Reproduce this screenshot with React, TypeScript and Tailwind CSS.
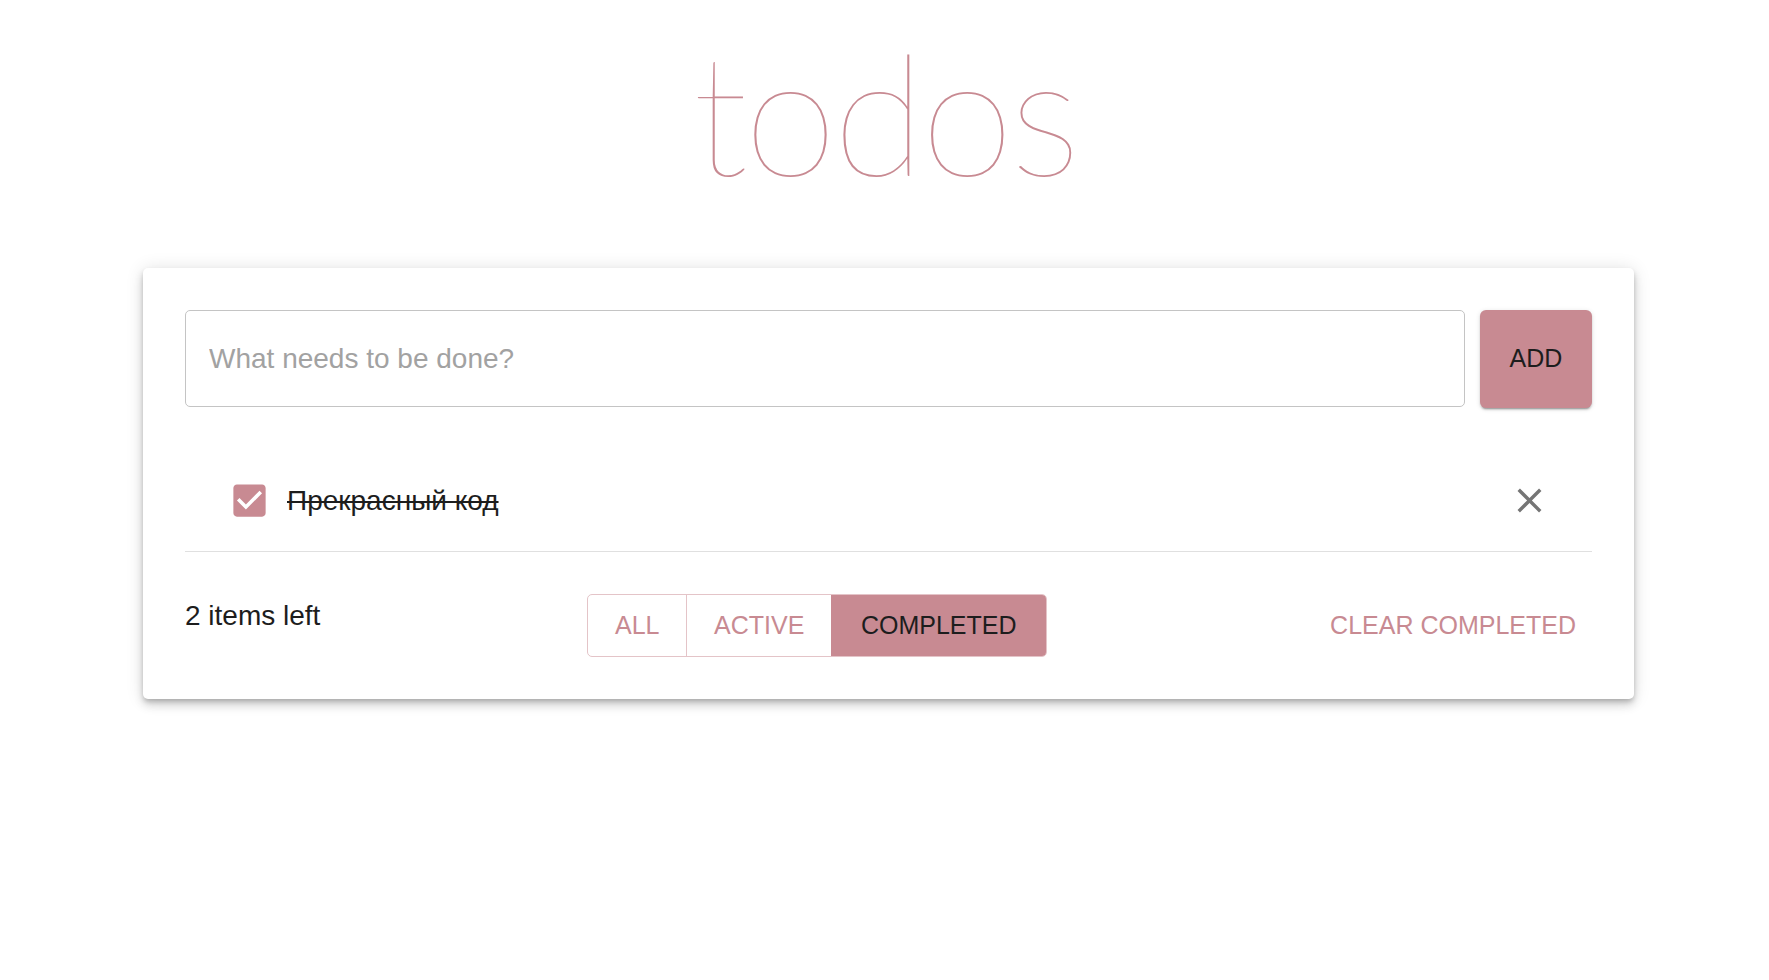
import { useState } from "react";

type Filter = "all" | "active" | "completed";

const PINK = "#c88a92";

export default function App() {
    const [filter, setFilter] = useState<Filter>("completed");
    const [text, setText] = useState<string>("");
    const [todos, setTodos] = useState([
        { id: 1, title: "Прекрасный код", done: true },
    ]);

    const toggle = (id: number) => {
        setTodos(todos.map((t) => (t.id === id ? { ...t, done: !t.done } : t)));
    };

    const remove = (id: number) => {
        setTodos(todos.filter((t) => t.id !== id));
    };

    const visible = todos.filter((t) =>
        filter === "all" ? true : filter === "active" ? !t.done : t.done
    );

    return (
        <div className="min-h-screen bg-white font-['Liberation_Sans',Arial,sans-serif] text-[#1d1d1d]">
            <h1 className="pt-[21px] h-[268px] text-center font-['Lato',sans-serif] font-thin text-[169px] leading-[180px] text-[#c88a92] tracking-[-4px]">
                todos
            </h1>

            <div className="pl-[143px] pr-[135px]">
                <div className="bg-white rounded-[5px] p-[42px] shadow-[0_3px_5px_-1px_rgba(0,0,0,0.2),0_6px_10px_0_rgba(0,0,0,0.14),0_1px_18px_0_rgba(0,0,0,0.12)]">
                    <div className="flex gap-[15px]">
                        <input
                            value={text}
                            onChange={(e) => setText(e.target.value)}
                            placeholder="What needs to be done?"
                            className="flex-1 h-[97px] px-[23px] text-[28px] border border-[#c4c4c4] rounded-[5px] outline-none placeholder:text-[#a2a2a2]"
                        />
                        <button className="w-[112px] h-[98px] rounded-[6px] bg-[#c88a92] text-[25px] text-[#1d1d1d] shadow-[0_3px_1px_-2px_rgba(0,0,0,0.2),0_2px_2px_0_rgba(0,0,0,0.14),0_1px_5px_0_rgba(0,0,0,0.12)]">
                            ADD
                        </button>
                    </div>

                    <ul className="mt-[42px]">
                        {visible.map((todo) => (
                            <li key={todo.id} className="flex items-center h-[102px] border-b border-[#e0e0e0] pl-[40px] pr-[42px]">
                                <button onClick={() => toggle(todo.id)} className="w-[43px] h-[43px] ml-[3px] flex items-center justify-center">
                                    <svg viewBox="0 0 24 24" width="43" height="43" fill={PINK}>
                                        <path d="M19 3H5c-1.11 0-2 .9-2 2v14c0 1.1.89 2 2 2h14c1.11 0 2-.9 2-2V5c0-1.1-.89-2-2-2zm-9 14l-5-5 1.41-1.41L10 14.17l7.59-7.59L19 8l-9 9z" />
                                    </svg>
                                </button>
                                <span className="ml-[16px] text-[28px] line-through decoration-[2px] flex-1">
                                    {todo.title}
                                </span>
                                <button onClick={() => remove(todo.id)} className="w-[41px] h-[41px] flex items-center justify-center">
                                    <svg viewBox="0 0 24 24" width="41" height="41" fill="#757575">
                                        <path d="M19 6.41 17.59 5 12 10.59 6.41 5 5 6.41 10.59 12 5 17.59 6.41 19 12 13.41 17.59 19 19 17.59 13.41 12z" />
                                    </svg>
                                </button>
                            </li>
                        ))}
                    </ul>

                    <div className="mt-[42px] flex justify-between items-start">
                        <span className="text-[28px] leading-[32px] pt-[6px]">2 items left</span>
                        <div className="flex h-[63px] rounded-[5px] border border-[#e4c4c8] overflow-hidden text-[25px]">
                            <button
                                onClick={() => setFilter("all")}
                                className={filter === "all" ? "w-[98px] bg-[#c88a92] text-[#1d1d1d]" : "w-[98px] text-[#c88a92]"}
                            >
                                ALL
                            </button>
                            <button
                                onClick={() => setFilter("active")}
                                className={filter === "active" ? "w-[145px] border-l border-[#e4c4c8] bg-[#c88a92] text-[#1d1d1d]" : "w-[145px] border-l border-[#e4c4c8] text-[#c88a92]"}
                            >
                                ACTIVE
                            </button>
                            <button
                                onClick={() => setFilter("completed")}
                                className={filter === "completed" ? "w-[215px] bg-[#c88a92] text-[#1d1d1d]" : "w-[215px] border-l border-[#e4c4c8] text-[#c88a92]"}
                            >
                                COMPLETED
                            </button>
                        </div>
                        <button className="h-[63px] px-[16px] text-[25px] text-[#c88a92]">
                            CLEAR COMPLETED
                        </button>
                    </div>
                </div>
            </div>
        </div>
    );
}
